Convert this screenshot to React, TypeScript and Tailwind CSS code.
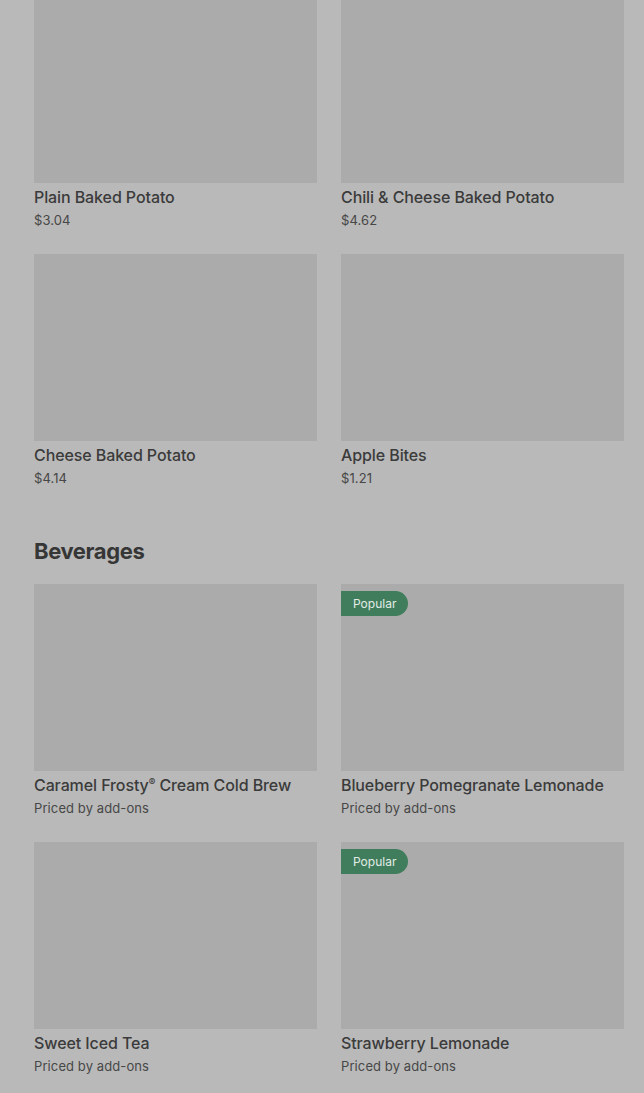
type Item = { name: string; price: string; popular?: boolean };

const sides: Item[] = [
  { name: "Plain Baked Potato", price: "$3.04" },
  { name: "Chili & Cheese Baked Potato", price: "$4.62" },
  { name: "Cheese Baked Potato", price: "$4.14" },
  { name: "Apple Bites", price: "$1.21" },
];

const beverages: Item[] = [
  { name: "Caramel Frosty® Cream Cold Brew", price: "Priced by add-ons" },
  { name: "Blueberry Pomegranate Lemonade", price: "Priced by add-ons", popular: true },
  { name: "Sweet Iced Tea", price: "Priced by add-ons" },
  { name: "Strawberry Lemonade", price: "Priced by add-ons", popular: true },
];

function Title({ name }: { name: string }) {
  // registered mark is set small and raised, as in the menu
  const parts = name.split("®");
  if (parts.length === 1) return <>{name}</>;
  return (
    <>
      {parts[0]}
      <span className="relative top-[-5px] text-[10px] leading-[0]">®</span>
      {parts[1]}
    </>
  );
}

function Card({ item, cut }: { item: Item; cut?: boolean }) {
  return (
    <div className="flex flex-col">
      <div className={`relative w-full bg-[#ababab] ${cut ? "h-[183px]" : "h-[187px]"}`}>
        {item.popular && (
          <span className="absolute left-0 top-[7px] flex h-[25px] items-center rounded-r-full bg-[#407d5c] pl-[12px] pr-[12px] text-[12px] text-[#e3ece6]">
            Popular
          </span>
        )}
      </div>
      <p className="mt-[4px] h-[20px] text-[16px] font-medium leading-[20px] tracking-[-0.1px] text-[#3b3b3b]">
        <Title name={item.name} />
      </p>
      <p className="mt-[4px] text-[13px] leading-[18px] tracking-[0.1px] text-[#474747]">{item.price}</p>
    </div>
  );
}

export default function App() {
  return (
    <div className="min-h-[1093px] w-full bg-[#b9b9b9] pl-[34px] pr-[20px] font-['Inter',sans-serif]">
      <div className="grid grid-cols-2 gap-x-[24px] gap-y-[25px]">
        {sides.map((item, i) => (
          <Card key={item.name} item={item} cut={i < 2} />
        ))}
      </div>

      <h2 className="mt-[48px] mb-[17px] text-[22px] font-bold leading-[32px] tracking-[-0.4px] text-[#363636]">
        Beverages
      </h2>

      <div className="grid grid-cols-2 gap-x-[24px] gap-y-[25px] pb-[30px]">
        {beverages.map((item) => (
          <Card key={item.name} item={item} />
        ))}
      </div>
    </div>
  );
}
